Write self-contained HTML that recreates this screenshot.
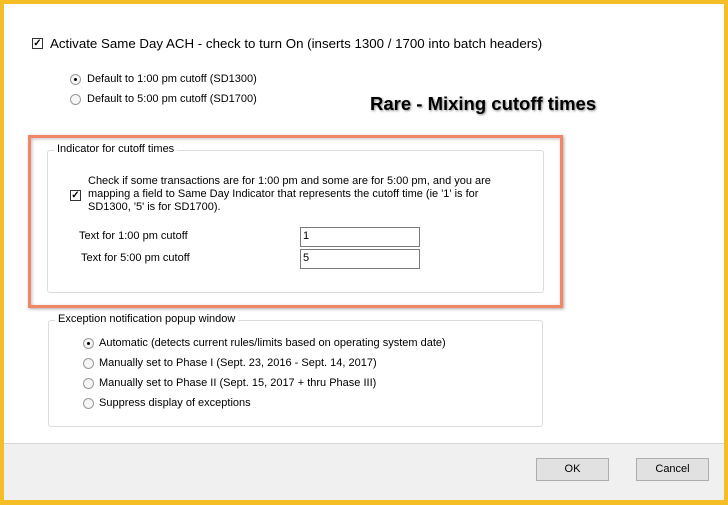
<!DOCTYPE html>
<html><head><style>
*{margin:0;padding:0;box-sizing:border-box}
body{width:728px;height:505px;background:#f5bd26;position:relative;overflow:hidden;font-family:"Liberation Sans",sans-serif;color:#000}
.a{position:absolute;white-space:nowrap}
.s{font-size:11px}
.main{position:absolute;left:4px;top:4px;width:720px;height:439px;background:#fff}
.foot{position:absolute;left:4px;top:443px;width:720px;height:57px;background:#f0f0f0;border-top:1px solid #d7d7d7}
.cb{position:absolute;width:11px;height:11px;border:1px solid #333;background:#fff;font-size:10px;line-height:9px;text-align:center;font-weight:bold}
.rb{position:absolute;width:11px;height:11px;border:1px solid #999;border-radius:50%;background:#f6f6f6}
.rb.on::after{content:"";position:absolute;left:3px;top:3px;width:3px;height:3px;border-radius:50%;background:#000}
.gb{position:absolute;border:1px solid #dcdcdc;border-radius:3px}
.gb span{position:absolute;top:-8px;left:6px;background:#fff;padding:0 3px;font-size:11px}
.tb{position:absolute;border:1px solid #7a7a7a;background:#fff;font-size:11px;padding:2px 2px}
.btn{position:absolute;width:73px;height:23px;border:1px solid #adadad;background:#e1e1e1;font-size:11px;text-align:center;line-height:21px}
</style></head><body>
<div class="main"></div>
<div class="foot"></div>
<div class="cb" style="left:32px;top:38px">✓</div>
<div class="a" style="left:50px;top:36px;font-size:13.3px">Activate Same Day ACH - check to turn On (inserts 1300 / 1700 into batch headers)</div>
<div class="rb on" style="left:70px;top:74px"></div>
<div class="a s" style="left:87px;top:73px">Default to 1:00 pm cutoff (SD1300)</div>
<div class="rb" style="left:70px;top:94px"></div>
<div class="a s" style="left:87px;top:93px">Default to 5:00 pm cutoff (SD1700)</div>
<div class="a" style="left:370px;top:93px;font-size:18.5px;font-weight:bold;text-shadow:1px 1px 2px #888">Rare - Mixing cutoff times</div>
<div style="position:absolute;left:28px;top:135px;width:535px;height:173px;border:3px solid #f08866;box-shadow:1px 1px 3px rgba(0,0,0,.35),inset 1px 1px 3px rgba(0,0,0,.25)"></div>
<div class="gb" style="left:47px;top:150px;width:497px;height:143px"><span>Indicator for cutoff times</span></div>
<div class="cb" style="left:70px;top:190px">✓</div>
<div class="a s" style="left:88px;top:175px;line-height:13px">Check if some transactions are for 1:00 pm and some are for 5:00 pm, and you are<br>mapping a field to Same Day Indicator that represents the cutoff time (ie '1' is for<br>SD1300, '5' is for SD1700).</div>
<div class="a s" style="left:79px;top:230px">Text for 1:00 pm cutoff</div>
<div class="a s" style="left:81px;top:252px">Text for 5:00 pm cutoff</div>
<div class="tb" style="left:300px;top:227px;width:120px;height:20px">1</div>
<div class="tb" style="left:300px;top:249px;width:120px;height:20px">5</div>
<div class="gb" style="left:48px;top:320px;width:495px;height:107px"><span>Exception notification popup window</span></div>
<div class="rb on" style="left:83px;top:338px"></div>
<div class="a s" style="left:99px;top:337px">Automatic (detects current rules/limits based on operating system date)</div>
<div class="rb" style="left:83px;top:358px"></div>
<div class="a s" style="left:99px;top:357px">Manually set to Phase I (Sept. 23, 2016 - Sept. 14, 2017)</div>
<div class="rb" style="left:83px;top:378px"></div>
<div class="a s" style="left:99px;top:377px">Manually set to Phase II (Sept. 15, 2017 + thru Phase III)</div>
<div class="rb" style="left:83px;top:398px"></div>
<div class="a s" style="left:99px;top:397px">Suppress display of exceptions</div>
<div class="btn" style="left:536px;top:458px">OK</div>
<div class="btn" style="left:636px;top:458px">Cancel</div>
</body></html>
